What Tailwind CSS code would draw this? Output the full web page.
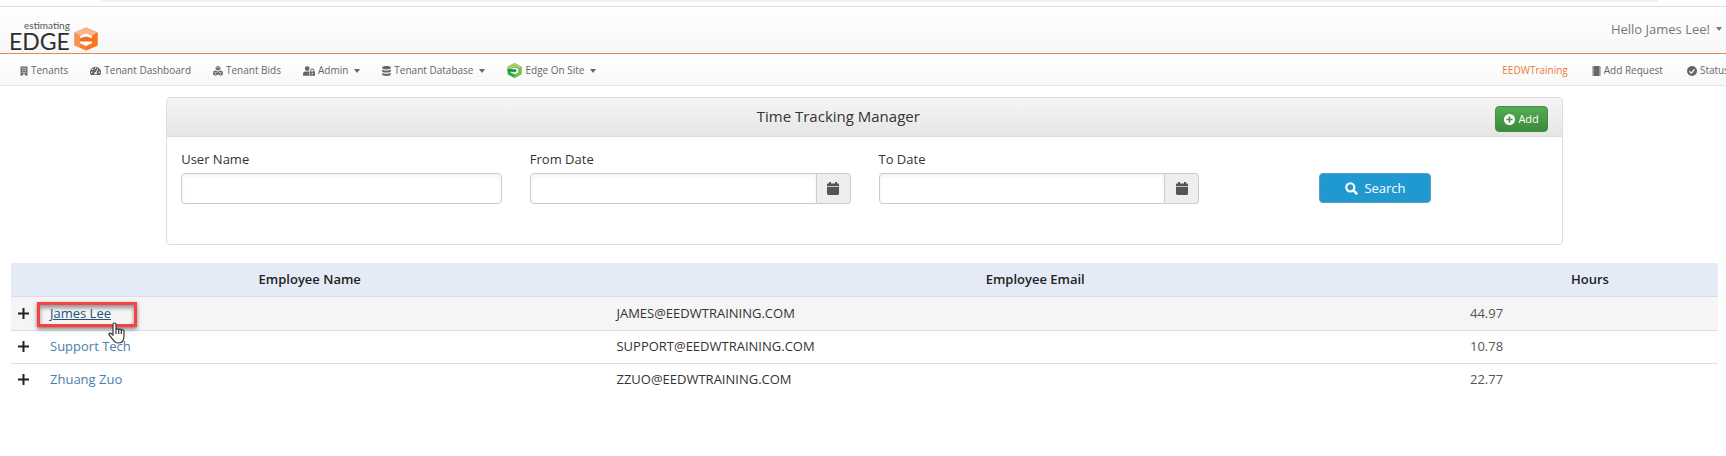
<!DOCTYPE html>
<html lang="en">
<head>
    <meta charset="UTF-8">
    <meta name="viewport" content="width=device-width, initial-scale=1.0">
    <title>Time Tracking Manager</title>
    <script src="https://cdn.jsdelivr.net/npm/@tailwindcss/browser@4"></script>
</head>
<body class="min-h-screen overflow-x-hidden bg-white font-['Open_Sans','Noto_Sans',sans-serif] text-sm text-[#333]">
    <div class="h-1.5 pl-25 pr-17">
        <div class="h-0.5 rounded-b-lg bg-[#eff0f2]"></div>
    </div>

    <header class="flex h-12 items-center justify-between border-t border-b border-t-[#dddddd] border-b-[#e2894f] bg-linear-to-b from-white to-[#f7f7f7] pr-1 pl-[9px]">
        <a href="#" class="flex items-end gap-1 self-end pb-0.5 font-['Lato',sans-serif] text-[#2e2e30]">
            <span class="flex flex-col items-end">
                <span class="text-[10px] leading-3 text-[#555]">estimating</span>
                <span class="text-[23px] leading-5">EDGE</span>
            </span>
            <svg class="h-6 w-6" viewBox="0 0 24 24">
                <path d="M12 .5 23.500 5.500v13L12 23.500.5 18.500v-13z" fill="#f58233"/>
                <path d="M12 .5 23.500 5.500 18 9 12 7 6 9 .5 5.500z" fill="#fbb58c"/>
                <path d="M.5 5.500 6 9v11L.5 18.500z" fill="#f79350"/>
                <path d="M18 9l5.500-3.500v13L12 23.500V18z" fill="#f9761d"/>
                <path d="M6 11V9l6-2.500L18 9v2l-6-1.500z" fill="#fff"/>
                <path d="m6 12 6-2 6 2v2.500H6z" fill="#ef6c25"/>
                <path d="M6 14.500h12v1.700L12 19l-6-2.800z" fill="#fff"/>
            </svg>
        </a>
        <button type="button" class="flex items-center gap-1.5 pb-0.5 text-[13px] text-[#777]">
            Hello James Lee!
            <svg class="h-1 w-1.5 fill-current" viewBox="0 0 6 4"><path d="M0 0h6L3 4z"/></svg>
        </button>
    </header>

    <nav class="flex h-8 items-center justify-between border-b border-[#e5e5e5] bg-linear-to-b from-white to-[#f8f8f8] pt-0.5 pl-5 text-[10px] whitespace-nowrap text-[#666]">
        <div class="flex items-center gap-[22px]">
            <a href="#" class="flex items-center gap-[3px]">
                <svg class="h-2.5 w-2 fill-[#666]" viewBox="0 0 14 16"><path fill-rule="evenodd" d="M1 0h12v15h1v1H8.500v-3h-3v3H0v-1h1zM4 2.500v2h2v-2zm4 0v2h2v-2zM4 6v2h2V6zm4 0v2h2V6zM4 9.500v2h2v-2zm4 0v2h2v-2z"/></svg>
                Tenants
            </a>
            <a href="#" class="flex items-center gap-[3px]">
                <svg class="h-2.5 w-[11px] fill-[#666]" viewBox="0 0 18 16"><path fill-rule="evenodd" d="M9 1a9 9 0 0 0-7.800 13.500h15.600A9 9 0 0 0 9 1zM9 2.300a1.200 1.200 0 1 1 0 2.400 1.200 1.200 0 0 1 0-2.400zM4.300 4.300a1.200 1.200 0 1 1 0 2.400 1.200 1.200 0 0 1 0-2.400zM2.800 9a1.200 1.200 0 1 1 0 2.400 1.200 1.200 0 0 1 0-2.400zm12.400 0a1.200 1.200 0 1 1 0 2.400 1.200 1.200 0 0 1 0-2.400zM12.500 4l1 .5-2.700 5.700a2.200 2.200 0 0 1-.4 3H7.600a2.200 2.200 0 0 1 2-3.500z"/></svg>
                Tenant Dashboard
            </a>
            <a href="#" class="flex items-center gap-[3px]">
                <svg class="h-2.5 w-2.5" viewBox="0 0 16 16">
                    <path fill="#666" d="m8 0 3.700 1.600v4L8 7.300 4.300 5.600v-4zM4 7l3.900 1.600v5.100L4 15.500.1 13.700V8.600zm8 0 3.900 1.600v5.100L12 15.500l-3.800-1.800V8.600z"/>
                    <path fill="none" stroke="#fff" stroke-width=".8" d="M5 2.200 8 3.500l3-1.300M1 9.700l3 1.300 3-1.300M9 9.700l3 1.300 3-1.300M4 11v3.500m8-3.500v3.500"/>
                </svg>
                Tenant Bids
            </a>
            <button type="button" class="flex items-center gap-[3px]">
                <svg class="h-2.5 w-3 fill-[#666]" viewBox="0 0 20 16"><path d="M7 0a4 4 0 1 1 0 8 4 4 0 0 1 0-8zM4 9h6v7H0v-3a4 4 0 0 1 4-4z"/><path fill-rule="evenodd" d="M11 9h1V7.500a3.500 3.500 0 0 1 7 0V9h1v7h-9zm2.500 0h4V7.500a2 2 0 0 0-4 0zm2 2a1.300 1.300 0 1 0 0 2.600 1.300 1.300 0 0 0 0-2.600z"/></svg>
                Admin
                <svg class="ml-[3px] h-1 w-1.5 fill-current" viewBox="0 0 6 4"><path d="M0 0h6L3 4z"/></svg>
            </button>
            <button type="button" class="flex items-center gap-[3px]">
                <svg class="h-2.5 w-[9px] fill-[#666]" viewBox="0 0 14 16"><path d="M7 0c4 0 7 1 7 2.200v1C14 4.500 11 5.500 7 5.500S0 4.500 0 3.200v-1C0 1 3 0 7 0zM0 5.500c1.500 1 4 1.500 7 1.500s5.500-.5 7-1.500v2.800c0 1.200-3 2.200-7 2.200S0 9.500 0 8.300zm0 5.200c1.500 1 4 1.500 7 1.500s5.500-.5 7-1.500v3c0 1.300-3 2.300-7 2.300s-7-1-7-2.300z"/></svg>
                Tenant Database
                <svg class="ml-[3px] h-1 w-1.5 fill-current" viewBox="0 0 6 4"><path d="M0 0h6L3 4z"/></svg>
            </button>
            <button type="button" class="flex items-center gap-[3px]">
                <svg class="h-[15px] w-[15px]" viewBox="0 0 24 24">
                    <path d="M12 0 23 6v12l-11 6L1 18V6z" fill="#2fa84a"/>
                    <path d="M12 0 23 6v6l-5-3-6-3-6 3-5 2V6z" fill="#a8cf62"/>
                    <path d="m12 18 6-3V9l5-3v12l-11 6z" fill="#79bd4d"/>
                    <path d="M6 9.500 12 7l6 2.500V15l-6 3-6-3v-1.500l6 1.500 3-1.500V12H6z" fill="#fff"/>
                    <path d="M1 10h12l3 1.500-3 1.500H1z" fill="#08943f"/>
                </svg>
                Edge On Site
                <svg class="ml-[3px] h-1 w-1.5 fill-current" viewBox="0 0 6 4"><path d="M0 0h6L3 4z"/></svg>
            </button>
        </div>
        <div class="-mr-[3px] flex items-center gap-6">
            <a href="#" class="text-[#f07a35]">EEDWTraining</a>
            <a href="#" class="flex items-center gap-[3px]">
                <svg class="h-2.5 w-[9px]" viewBox="0 0 14 16"><path fill="#666" d="M2 0h10v16H2z"/><path stroke="#888" stroke-width="2" stroke-dasharray="2 1" d="M1 1v14M13 1v14"/></svg>
                Add Request
            </a>
            <a href="#" class="flex items-center gap-[3px]">
                <svg class="h-2.5 w-2.5" viewBox="0 0 16 16"><circle cx="8" cy="8" r="8" fill="#666"/><path d="m4 8.500 3 3L12 5.500" fill="none" stroke="#fff" stroke-width="2"/></svg>
                Status
            </a>
        </div>
    </nav>

    <main class="pt-[11px] pr-2 pl-[11px]">
        <section class="mx-auto w-9/11 rounded border border-[#dddddd] bg-white">
            <div class="flex h-[39px] items-center rounded-t border-b border-[#dddddd] bg-linear-to-b from-[#f5f5f5] to-[#e6e6e6] px-3.5">
                <h1 class="flex-1 text-center text-[15px] font-medium">Time Tracking Manager</h1>
                <button type="button" class="mt-1 flex h-[26px] items-center gap-[3px] rounded-sm border border-[#3e8f3e] bg-linear-to-b from-[#55ab55] to-[#3c8a3c] px-2 text-[11px] text-white">
                    <svg class="h-[11px] w-[11px]" viewBox="0 0 16 16"><circle cx="8" cy="8" r="8" fill="#fff"/><path d="M8 3.500v9M3.500 8h9" stroke="#449944" stroke-width="2.500"/></svg>
                    Add
                </button>
            </div>
            <form class="grid grid-cols-4 pt-3 pb-10">
                <div class="px-3.5">
                    <label for="userName" class="mb-1 block text-[13px] leading-5 font-medium">User Name</label>
                    <input id="userName" type="text" class="block h-[31px] w-full rounded border border-[#cccccc] px-3 shadow-inner shadow-black/5">
                </div>
                <div class="px-3.5">
                    <label for="fromDate" class="mb-1 block text-[13px] leading-5 font-medium">From Date</label>
                    <div class="flex">
                        <input id="fromDate" type="text" class="h-[31px] min-w-0 flex-1 rounded-l border border-[#cccccc] px-3 shadow-inner shadow-black/5">
                        <button type="button" aria-label="Pick from date" class="flex h-[31px] w-[34px] items-center justify-center rounded-r border border-l-0 border-[#cccccc] bg-[#eeeeee]">
                            <svg class="h-[13px] w-3 fill-[#555]" viewBox="0 0 12 13"><path d="M2 0h2v1.500h4V0h2v1.500h1.500L12 2v2H0V2l.5-.5H2zM0 4.800h12V12l-1 1H1l-1-1z"/></svg>
                        </button>
                    </div>
                </div>
                <div class="px-3.5">
                    <label for="toDate" class="mb-1 block text-[13px] leading-5 font-medium">To Date</label>
                    <div class="flex">
                        <input id="toDate" type="text" class="h-[31px] min-w-0 flex-1 rounded-l border border-[#cccccc] px-3 shadow-inner shadow-black/5">
                        <button type="button" aria-label="Pick to date" class="flex h-[31px] w-[34px] items-center justify-center rounded-r border border-l-0 border-[#cccccc] bg-[#eeeeee]">
                            <svg class="h-[13px] w-3 fill-[#555]" viewBox="0 0 12 13"><path d="M2 0h2v1.500h4V0h2v1.500h1.500L12 2v2H0V2l.5-.5H2zM0 4.800h12V12l-1 1H1l-1-1z"/></svg>
                        </button>
                    </div>
                </div>
                <div class="flex items-end justify-center pr-6 pb-px">
                    <button type="button" class="flex h-[30px] w-28 items-center justify-center gap-1.5 rounded-sm border border-[#5b9fc0] bg-[#1f99d0] text-[13px] text-white">
                        <svg class="h-[13px] w-[13px]" viewBox="0 0 16 16" fill="none" stroke="#fff" stroke-width="2.600"><circle cx="6.500" cy="6.500" r="5"/><path d="m10 10 5 5" stroke-width="3.200"/></svg>
                        Search
                    </button>
                </div>
            </form>
        </section>

        <table class="mt-[18px] w-full table-fixed text-[13px]">
            <colgroup>
                <col class="w-[31px]">
                <col>
                <col class="w-1/2">
                <col class="w-[15%]">
            </colgroup>
            <thead>
                <tr class="h-[33px] border-b border-[#dcdde4] bg-[#e5ebf6] text-[#222]">
                    <th colspan="2" class="font-semibold">Employee Name</th>
                    <th class="font-semibold">Employee Email</th>
                    <th class="font-semibold">Hours</th>
                </tr>
            </thead>
            <tbody>
                <tr class="h-[34px] border-b border-[#dddddd] bg-[#f5f5f5]">
                    <td class="pl-[7px]"><button type="button" aria-label="Expand James Lee" class="block"><svg class="h-[11px] w-[11px]" viewBox="0 0 11 11"><path d="M5.500 0v11M0 5.500h11" stroke="#222" stroke-width="2"/></svg></button></td>
                    <td class="px-2">
                        <div class="relative w-fit">
                            <a href="#" class="text-[#23527c] underline">James Lee</a>
                            <div class="pointer-events-none absolute -top-0.5 -left-[13px] h-[25px] w-25 border-3 border-[#f94144] shadow-[0_2px_4px_rgba(0,0,0,0.5),inset_0_3px_4px_rgba(0,0,0,0.4)]"></div>
                            <svg class="pointer-events-none absolute top-4.5 left-14.5 z-10 h-[22px] w-[18px]" viewBox="0 0 18 22"><path d="M5 13V2.500C5 .5 8 .5 8 2.500V8c0-1.500 2.500-1.500 2.700 0 .3-1.300 2.600-1 2.600.5.500-1.200 2.700-.8 2.700.8V14c0 4-2 7-5.500 7-3 0-4.500-1.500-6-4L1.200 13c-.7-1.500 1-2.500 2.200-1.200zM8 8v4m2.700-4v4m2.600-3.500V12" fill="#fff" stroke="#333" stroke-width="1.200"/></svg>
                        </div>
                    </td>
                    <td class="px-2">JAMES@EEDWTRAINING.COM</td>
                    <td class="px-2 text-[#555]">44.97</td>
                </tr>
                <tr class="h-[33px] border-b border-[#dddddd]">
                    <td class="pl-[7px]"><button type="button" aria-label="Expand Support Tech" class="block"><svg class="h-[11px] w-[11px]" viewBox="0 0 11 11"><path d="M5.500 0v11M0 5.500h11" stroke="#222" stroke-width="2"/></svg></button></td>
                    <td class="px-2"><a href="#" class="text-[#4a7dad]">Support Tech</a></td>
                    <td class="px-2">SUPPORT@EEDWTRAINING.COM</td>
                    <td class="px-2 text-[#555]">10.78</td>
                </tr>
                <tr class="h-[33px]">
                    <td class="pl-[7px]"><button type="button" aria-label="Expand Zhuang Zuo" class="block"><svg class="h-[11px] w-[11px]" viewBox="0 0 11 11"><path d="M5.500 0v11M0 5.500h11" stroke="#222" stroke-width="2"/></svg></button></td>
                    <td class="px-2"><a href="#" class="text-[#4a7dad]">Zhuang Zuo</a></td>
                    <td class="px-2">ZZUO@EEDWTRAINING.COM</td>
                    <td class="px-2 text-[#555]">22.77</td>
                </tr>
            </tbody>
        </table>
    </main>
</body>
</html>
